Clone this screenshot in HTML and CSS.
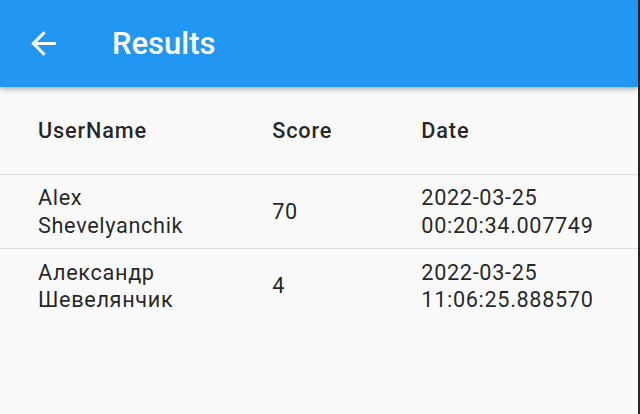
FILE: index.html
```html
<!DOCTYPE html>
<html lang="en">
<head>
<meta charset="utf-8">
<title>Results</title>
<link rel="stylesheet" href="styles.css">
</head>
<body>
<div class="screen">
  <header class="appbar">
    <button class="back" aria-label="Back">
      <svg viewBox="0 0 24 24" width="37" height="37"><path fill="#fff" d="M20 11H7.83l5.59-5.59L12 4l-8 8 8 8 1.41-1.41L7.83 13H20v-2z"/></svg>
    </button>
    <h1 class="title">Results</h1>
  </header>
  <main class="content">
    <table class="results">
      <thead>
        <tr><th class="shrink">UserName</th><th class="shrink">Score</th><th>Date</th></tr>
      </thead>
      <tbody>
        <tr><td>Alex<br>Shevelyanchik</td><td>70</td><td>2022-03-25<br>00:20:34.007749</td></tr>
        <tr><td>Александр<br>Шевелянчик</td><td>4</td><td>2022-03-25<br>11:06:25.888570</td></tr>
      </tbody>
    </table>
  </main>
</div>
<div class="edge"></div>
</body>
</html>
```
FILE: styles.css
```css
html, body {
  margin: 0;
  padding: 0;
  height: 100%;
}
body {
  display: flex;
  height: 414px;
  overflow: hidden;
  font-family: Roboto, "Noto Sans", sans-serif;
  background: #fafafa;
}
.screen {
  flex: 1;
  display: flex;
  flex-direction: column;
  background: #fafafa;
}
.edge {
  width: 2px;
  background: #262626;
}
.appbar {
  height: 87px;
  flex: none;
  display: flex;
  align-items: center;
  background: #2196f3;
  box-shadow: 0 3px 6px rgba(0, 0, 0, 0.22), 0 1px 3px rgba(0, 0, 0, 0.14);
  position: relative;
  z-index: 1;
}
.back {
  width: 87px;
  height: 87px;
  flex: none;
  border: 0;
  padding: 0;
  background: transparent;
  display: flex;
  align-items: center;
  justify-content: center;
}
.back svg { display: block; }
.title {
  margin: 0 0 0 25px;
  color: #fff;
  font-size: 31px;
  font-weight: 500;
  line-height: 1;
}
.content {
  flex: 1;
}
.results {
  width: 100%;
  border-collapse: collapse;
  border-spacing: 0;
  color: rgba(0, 0, 0, 0.87);
  font-size: 21.7px;
}
.results th,
.results td {
  padding: 0 44.5px;
  text-align: left;
  vertical-align: middle;
  white-space: nowrap;
}
.results .shrink { width: 1%; }
.results th:first-child,
.results td:first-child { padding-left: 38px; }
.results th:last-child,
.results td:last-child { padding-right: 38px; }
.results th {
  height: 87px;
  font-weight: 500;
  line-height: 1;
  letter-spacing: 0.85px;
}
.results td {
  height: 73px;
  line-height: 27.5px;
  font-weight: 400;
  letter-spacing: 0.65px;
}
.results thead tr,
.results tbody tr {
  border-bottom: 1px solid #dcdcdc;
}
.results tbody tr:last-child {
  border-bottom: 0;
}
.results tbody tr:last-child td { height: 74px; }
```
